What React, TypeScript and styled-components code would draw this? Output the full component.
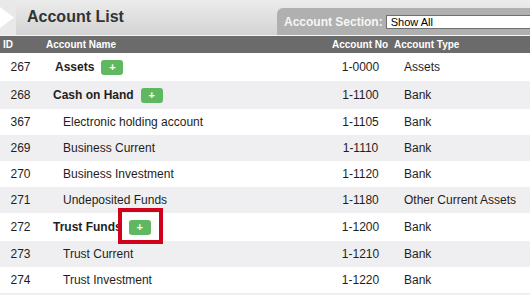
import styled, { createGlobalStyle } from 'styled-components'

const GlobalStyle = createGlobalStyle`
  html, body {
    margin: 0;
    padding: 0;
    overflow: hidden;
    background: #efeff1;
    font-family: "Liberation Sans", Arial, sans-serif;
    color: #1e1e1e;
  }
`

const Page = styled.div`
  width: 530px;
  overflow: hidden;
`

const TitleBar = styled.header`
  display: flex;
  align-items: flex-end;
  height: 35px;
  background: linear-gradient(#ececec, #d3d3d3);
  border-bottom: 1px solid #f4f4f4;
`

const Arrow = styled.div`
  align-self: stretch;
  width: 16px;
  background: #e9e9e9;
  display: flex;
  align-items: center;

  & svg {
    display: block;
  }
`

const Title = styled.h1`
  margin: 0 0 0 11px;
  align-self: center;
  font-size: 16px;
  font-weight: bold;
  color: #333;
  flex: 1;
  padding-bottom: 1px;
`

const SectionPanel = styled.div`
  display: flex;
  align-items: flex-start;
  flex-shrink: 0;
  width: 253px;
  height: 27px;
  padding: 6px 0 0 7px;
  box-sizing: border-box;
  overflow: hidden;
  background: #b0b0b0;
  border-top-left-radius: 6px;
  gap: 3px;
`

const SectionLabel = styled.span`
  font-size: 12px;
  font-weight: bold;
  color: #f6f6f6;
  line-height: 16px;
  white-space: nowrap;
`

const SectionSelect = styled.div`
  flex-shrink: 0;
  margin-top: 1px;
  width: 170px;
  height: 14px;
  box-sizing: border-box;
  background: #fff;
  border: 1px solid #6f6f6f;
  font-size: 11px;
  line-height: 12px;
  padding-left: 4px;
  color: #000;
`

const Grid = styled.div`
  display: grid;
  grid-template-columns: 43px 287px 61px 1fr;
  align-items: center;
`

const HeadRow = styled(Grid)`
  height: 17px;
  background: #6b6b6b;
  color: #fff;
  font-size: 10px;
  font-weight: bold;
`

const HeadCell = styled.div<{ $pad: number }>`
  padding-left: ${p => p.$pad}px;
  white-space: nowrap;
`

const Row = styled(Grid)<{ $striped: boolean, $tall: boolean }>`
  height: ${p => (p.$tall ? 28 : 26)}px;
  background: ${p => (p.$striped ? '#efeff1' : '#ffffff')};
  font-size: 12px;
`

const IdCell = styled.div`
  text-align: center;
  padding-right: 2px;
`

const NameCell = styled.div<{ $indent: number, $bold: boolean }>`
  display: flex;
  align-items: center;
  padding-left: ${p => p.$indent}px;
  font-weight: ${p => (p.$bold ? 'bold' : 'normal')};
  white-space: nowrap;
`

const NoCell = styled.div`
  text-align: center;
`

const TypeCell = styled.div`
  padding-left: 13px;
  white-space: nowrap;
`

const AddWrap = styled.span`
  position: relative;
  display: inline-flex;
  margin-left: 7px;
`

const AddButton = styled.button`
  width: 22px;
  height: 15px;
  padding: 0;
  border: none;
  border-radius: 3px;
  background: #5fb760;
  color: #fff;
  font-family: "Liberation Sans", Arial, sans-serif;
  font-size: 11px;
  font-weight: bold;
  line-height: 15px;
  cursor: pointer;
`

const Highlight = styled.span`
  position: absolute;
  left: -11px;
  top: -12px;
  width: 45px;
  height: 36px;
  box-sizing: border-box;
  border: 4px solid #d0021b;
  pointer-events: none;
`

type Account = {
  id: number
  name: string
  no: string
  type: string
  indent: number
  header?: boolean
  marked?: boolean
}

const accounts: Account[] = [
  { id: 267, name: 'Assets', no: '1-0000', type: 'Assets', indent: 12, header: true },
  { id: 268, name: 'Cash on Hand', no: '1-1100', type: 'Bank', indent: 10, header: true },
  { id: 367, name: 'Electronic holding account', no: '1-1105', type: 'Bank', indent: 20 },
  { id: 269, name: 'Business Current', no: '1-1110', type: 'Bank', indent: 20 },
  { id: 270, name: 'Business Investment', no: '1-1120', type: 'Bank', indent: 20 },
  { id: 271, name: 'Undeposited Funds', no: '1-1180', type: 'Other Current Assets', indent: 20 },
  { id: 272, name: 'Trust Funds', no: '1-1200', type: 'Bank', indent: 10, header: true, marked: true },
  { id: 273, name: 'Trust Current', no: '1-1210', type: 'Bank', indent: 20 },
  { id: 274, name: 'Trust Investment', no: '1-1220', type: 'Bank', indent: 20 },
]

export default function App() {
  return (
    <Page>
      <GlobalStyle />
      <TitleBar>
        <Arrow>
          <svg width="15" height="21" viewBox="0 0 15 21">
            <path d="M0 0 L14 10.5 L0 21 Z" fill="#ffffff" />
          </svg>
        </Arrow>
        <Title>Account List</Title>
        <SectionPanel>
          <SectionLabel>Account Section:</SectionLabel>
          <SectionSelect>Show All</SectionSelect>
        </SectionPanel>
      </TitleBar>

      <HeadRow>
        <HeadCell $pad={3}>ID</HeadCell>
        <HeadCell $pad={3}>Account Name</HeadCell>
        <HeadCell $pad={2}>Account No</HeadCell>
        <HeadCell $pad={3}>Account Type</HeadCell>
      </HeadRow>

      {accounts.map((a, i) => (
        <Row key={a.id} $striped={i % 2 == 1} $tall={!!a.header}>
          <IdCell>{a.id}</IdCell>
          <NameCell $indent={a.indent} $bold={!!a.header}>
            {a.name}
            {a.header && (
              <AddWrap>
                <AddButton aria-label="Add">+</AddButton>
                {a.marked && <Highlight />}
              </AddWrap>
            )}
          </NameCell>
          <NoCell>{a.no}</NoCell>
          <TypeCell>{a.type}</TypeCell>
        </Row>
      ))}
    </Page>
  )
}
